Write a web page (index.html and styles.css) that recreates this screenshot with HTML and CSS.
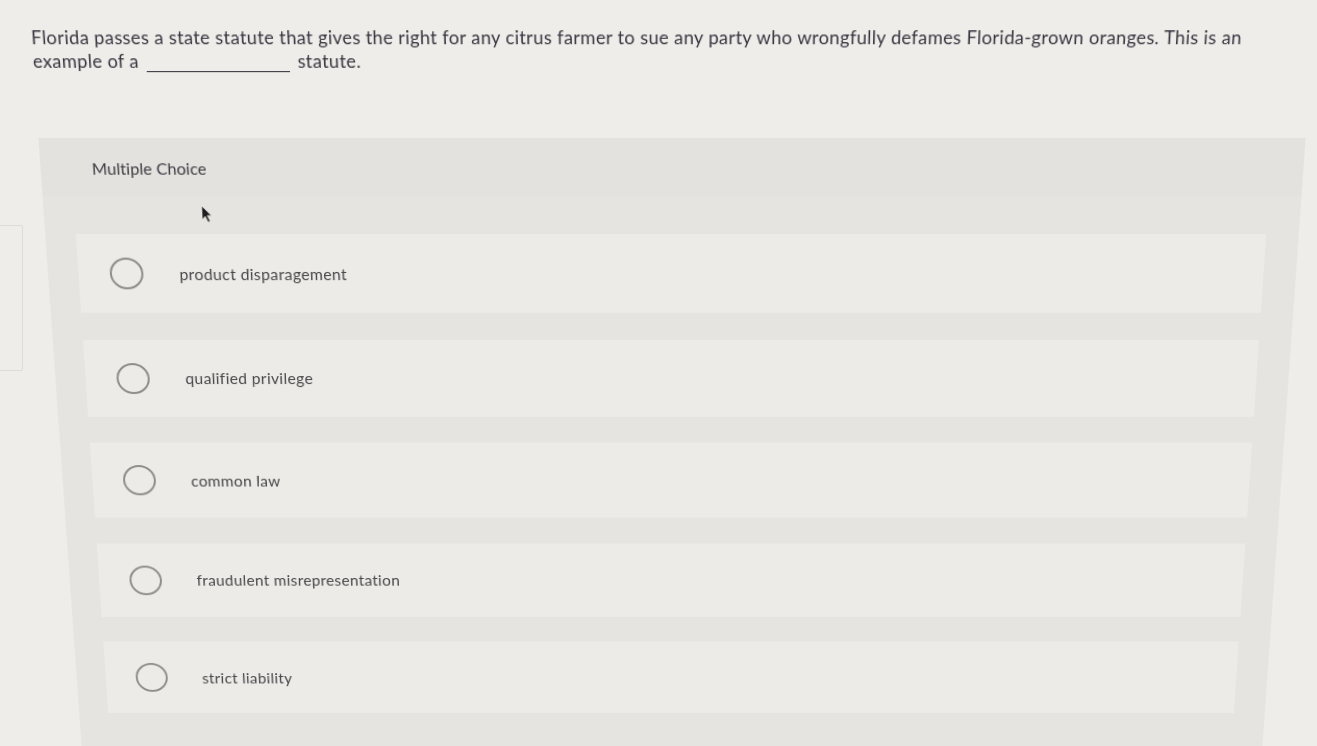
FILE: index.html
```html
<!DOCTYPE html>
<html lang="en">
<head>
<meta charset="utf-8">
<title>Multiple Choice</title>
<link rel="stylesheet" href="styles.css">
</head>
<body>
<div class="edge-box"></div>
<main class="page">
  <p class="question">Florida passes a state statute that gives the right for any citrus farmer to sue any party who wrongfully defames Florida-grown oranges. This is an <span class="tail">example of a</span> <span class="blank"></span> statute.</p>
  <section class="panel">
    <header class="panel-head">Multiple Choice</header>
    <div class="panel-body">
      <svg class="cursor" width="12" height="18" viewBox="0 0 12 18"><path d="M1 1 L1 14 L4 11 L6.5 16.5 L8.5 15.5 L6 10.2 L10 10.2 Z" fill="#1e1e1e" stroke="#e8e8e4" stroke-width="0.6"/></svg>
      <ul class="options">
        <li class="option"><span class="radio"></span><span class="label">product disparagement</span></li>
        <li class="option"><span class="radio"></span><span class="label">qualified privilege</span></li>
        <li class="option"><span class="radio"></span><span class="label">common law</span></li>
        <li class="option"><span class="radio"></span><span class="label">fraudulent misrepresentation</span></li>
        <li class="option"><span class="radio"></span><span class="label">strict liability</span></li>
      </ul>
    </div>
  </section>
</main>
</body>
</html>
```

FILE: styles.css
```css
html, body {
  margin: 0;
  padding: 0;
}
body {
  background: #eeede9;
  font-family: "Lato", "Open Sans", "Liberation Sans", sans-serif;
  width: 1317px;
  height: 746px;
  overflow: hidden;
  position: relative;
}
.edge-box {
  position: absolute;
  left: -4px;
  top: 225px;
  width: 25px;
  height: 144px;
  border: 1px solid #dcdbd6;
  border-radius: 2px;
}
.page {
  height: 763px;
  box-sizing: border-box;
  overflow: hidden;
  padding: 38.7px 30px 0 57px;
  transform-origin: 672px 400px;
  transform: perspective(1000px) rotateX(-6.6deg);
}
.question {
  margin: 0;
  max-width: 1195px;
  font-size: 17.6px;
  line-height: 22.4px;
  color: #3b3440;
  letter-spacing: 0.34px;
}
.tail {
  white-space: nowrap;
}
.blank {
  display: inline-block;
  width: 138px;
  height: 0;
  border-bottom: 1px solid #3b3440;
  vertical-align: -4px;
  margin: 0 3px 0 2px;
}
.panel {
  margin-top: 60.5px;
  background: #e5e4e0;
  height: 620px;
}
.panel-head {
  height: 56px;
  display: flex;
  align-items: center;
  padding-left: 50px;
  font-size: 16px;
  letter-spacing: 0.05px;
  color: #3f3a42;
  background: #e3e2de;
}
.panel-body {
  position: relative;
  padding: 36px 32.5px 0 30px;
}
.cursor {
  position: absolute;
  left: 154px;
  top: 8px;
}
.options {
  list-style: none;
  margin: 0;
  padding: 0;
  display: flex;
  flex-direction: column;
  gap: 26.5px;
}
.option {
  height: 77px;
  background: #ecebe7;
  display: flex;
  align-items: center;
  padding-left: 31px;
}
.radio {
  width: 33px;
  height: 31px;
  border: 2px solid #8e8d8c;
  border-radius: 50%;
  box-sizing: border-box;
  flex: none;
}
.label {
  margin-left: 35.5px;
  font-size: 15.6px;
  color: #4a464a;
  letter-spacing: 0.35px;
}
```
